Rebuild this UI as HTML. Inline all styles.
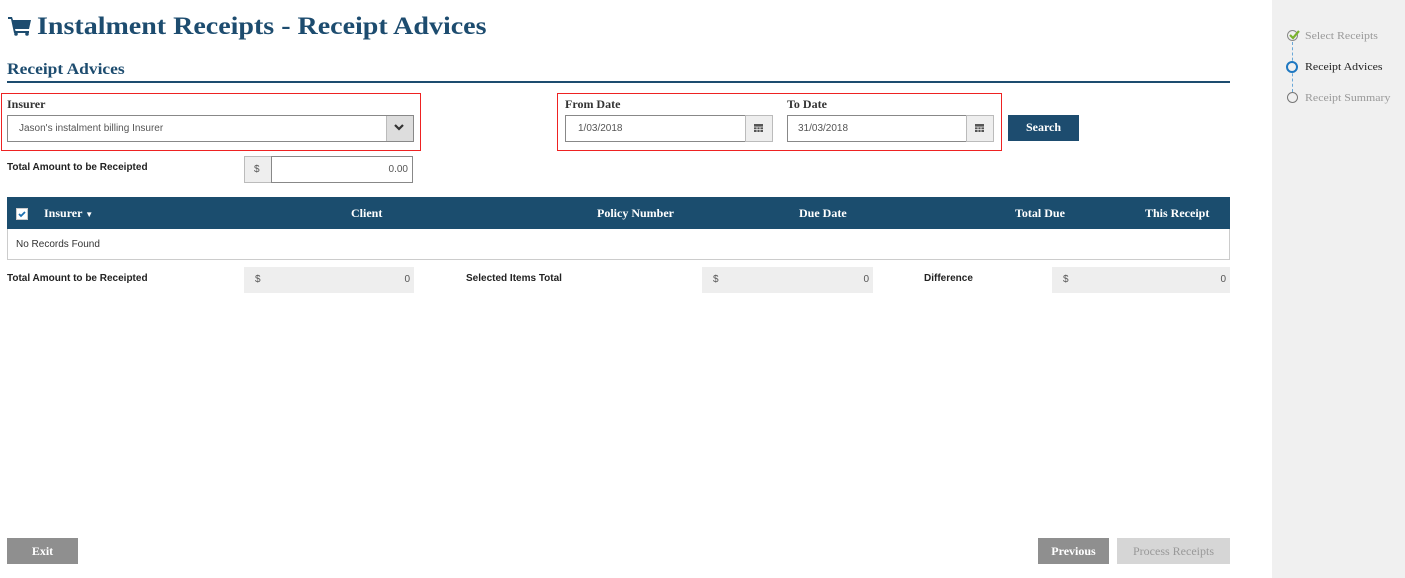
<!DOCTYPE html>
<html><head><meta charset="utf-8"><style>
*{box-sizing:border-box;margin:0;padding:0}
body{width:1405px;height:578px;background:#fff;position:relative;overflow:hidden;font-family:"Liberation Sans",sans-serif;color:#333}
.a{position:absolute}
.serif{font-family:"Liberation Serif",serif;font-weight:bold}
.navy{color:#1d4c6f}
.lbl{font-size:12px;color:#333;font-family:"Liberation Serif",serif;font-weight:bold}
.inp{border:1px solid #999;border-right-color:#ccc;border-bottom-color:#ccc;background:#fff;font-size:10px;color:#555}
.box{background:#eee;border:1px solid #bbb}
.b11{font-size:10px;font-weight:bold;color:#222}
.th{color:#fff;font-size:12px;font-family:"Liberation Serif",serif;font-weight:bold;top:206px}
.btn{font-family:"Liberation Serif",serif;font-weight:bold;font-size:12px;text-align:center;line-height:26px}
.sx{transform-origin:0 0;white-space:nowrap}
</style></head><body>
<svg class="a" style="left:8px;top:16px" width="24" height="20" viewBox="0 0 24 20"><path d="M0 1h4l1 3h18l-2 9H7l.6 2H21v2H6L3 3H0z" fill="#1d4c6f"/><circle cx="8" cy="18" r="1.8" fill="#1d4c6f"/><circle cx="19" cy="18" r="1.8" fill="#1d4c6f"/></svg>
<div class="a serif navy sx" style="left:37px;top:13px;font-size:25px;transform:scaleX(1.12)">Instalment Receipts - Receipt Advices</div>
<div class="a serif navy sx" style="left:7px;top:61px;font-size:16px;transform:scaleX(1.09)">Receipt Advices</div>
<div class="a" style="left:7px;top:81px;width:1223px;height:2px;background:#1d4c6f"></div>

<div class="a" style="left:1px;top:93px;width:420px;height:58px;border:1px solid #e22"></div>
<div class="a lbl" style="left:7px;top:97px">Insurer</div>
<div class="a inp" style="left:7px;top:115px;width:407px;height:27px;border:1px solid #888;padding:7px 11px">Jason's instalment billing Insurer</div>
<div class="a" style="left:386px;top:116px;width:27px;height:25px;background:#ddd;border-left:1px solid #bbb"></div>
<svg class="a" style="left:393px;top:123px" width="12" height="10"><path d="M2 2l4 4 4-4" stroke="#333" stroke-width="2.2" fill="none"/></svg>

<div class="a" style="left:557px;top:93px;width:445px;height:58px;border:1px solid #e22"></div>
<div class="a lbl" style="left:565px;top:97px">From Date</div>
<div class="a lbl" style="left:787px;top:97px">To Date</div>
<div class="a inp" style="left:565px;top:115px;width:208px;height:27px;border:1px solid #888;padding:7px 12px">1/03/2018</div>
<div class="a box" style="left:745px;top:115px;width:28px;height:27px"></div>
<div class="a inp" style="left:787px;top:115px;width:207px;height:27px;border:1px solid #888;padding:7px 10px">31/03/2018</div>
<div class="a box" style="left:966px;top:115px;width:28px;height:27px"></div>
<svg class="a" style="left:754px;top:123px" width="10" height="10"><rect x="0" y="1" width="9" height="8" fill="#555"/><path d="M0 4h9M3 4v5M6 4v5M0 6.5h9" stroke="#eee" stroke-width=".8"/></svg>
<svg class="a" style="left:975px;top:123px" width="10" height="10"><rect x="0" y="1" width="9" height="8" fill="#555"/><path d="M0 4h9M3 4v5M6 4v5M0 6.5h9" stroke="#eee" stroke-width=".8"/></svg>
<div class="a btn" style="left:1008px;top:115px;width:71px;height:26px;background:#1d4c6f;color:#fff;line-height:25px">Search</div>

<div class="a b11" style="left:7px;top:162px">Total Amount to be Receipted</div>
<div class="a box" style="left:244px;top:156px;width:28px;height:27px;font-size:10px;color:#555;padding:7px 9px">$</div>
<div class="a" style="left:271px;top:156px;width:142px;height:27px;border:1px solid #888;font-size:10px;color:#555;text-align:right;padding:7px 4px">0.00</div>

<div class="a" style="left:7px;top:197px;width:1223px;height:63px;border:1px solid #ccc"></div>
<div class="a" style="left:7px;top:197px;width:1223px;height:32px;background:#1b4d6e"></div>
<div class="a" style="left:16px;top:208px;width:12px;height:12px;background:#fff;border:1px solid #ccc"></div>
<svg class="a" style="left:17px;top:209px" width="10" height="10"><path d="M2 5l2 2 4-4" stroke="#1d6fb0" stroke-width="1.8" fill="none"/></svg>
<div class="a th" style="left:44px">Insurer <span style="font-size:8px">▼</span></div>
<div class="a th" style="left:351px">Client</div>
<div class="a th" style="left:597px">Policy Number</div>
<div class="a th" style="left:799px">Due Date</div>
<div class="a th" style="left:1015px">Total Due</div>
<div class="a th" style="left:1145px">This Receipt</div>
<div class="a" style="left:16px;top:239px;font-size:10px;color:#333">No Records Found</div>

<div class="a b11" style="left:7px;top:273px">Total Amount to be Receipted</div>
<div class="a" style="left:244px;top:267px;width:170px;height:26px;background:#eee;font-size:10px;color:#555;padding:7px 11px">$<span style="float:right;margin-right:-7px">0</span></div>
<div class="a b11" style="left:466px;top:273px">Selected Items Total</div>
<div class="a" style="left:702px;top:267px;width:171px;height:26px;background:#eee;font-size:10px;color:#555;padding:7px 11px">$<span style="float:right;margin-right:-7px">0</span></div>
<div class="a b11" style="left:924px;top:273px">Difference</div>
<div class="a" style="left:1052px;top:267px;width:178px;height:26px;background:#eee;font-size:10px;color:#555;padding:7px 11px">$<span style="float:right;margin-right:-7px">0</span></div>

<div class="a btn" style="left:7px;top:538px;width:71px;height:26px;background:#8f8f8f;color:#fff">Exit</div>
<div class="a btn" style="left:1038px;top:538px;width:71px;height:26px;background:#8f8f8f;color:#fff">Previous</div>
<div class="a btn" style="left:1117px;top:538px;width:113px;height:26px;background:#d6d6d6;color:#999;font-weight:normal">Process Receipts</div>

<div class="a" style="left:1272px;top:0;width:133px;height:578px;background:#f0f0f0"></div>
<div class="a" style="left:1292px;top:42px;height:50px;border-left:1px dashed #6aa8d8"></div>
<div class="a" style="left:1287px;top:30px;width:11px;height:11px;border-radius:50%;border:1.5px solid #888;background:#f0f0f0"></div>
<svg class="a" style="left:1288px;top:29px" width="12" height="11"><path d="M2 6l3 3 6-7" stroke="#7ab32e" stroke-width="2.2" fill="none"/></svg>
<div class="a" style="left:1286px;top:61px;width:12px;height:12px;border-radius:50%;border:2.5px solid #1f78c1;background:#f0f0f0"></div>
<div class="a" style="left:1287px;top:92px;width:11px;height:11px;border-radius:50%;border:1.2px solid #777;background:#f0f0f0"></div>
<div class="a sx" style="left:1305px;top:30px;font-size:11px;color:#999;font-family:'Liberation Serif',serif;transform:scaleX(1.08)">Select Receipts</div>
<div class="a sx" style="left:1305px;top:61px;font-size:11px;color:#222;font-family:'Liberation Serif',serif;transform:scaleX(1.08)">Receipt Advices</div>
<div class="a sx" style="left:1305px;top:92px;font-size:11px;color:#999;font-family:'Liberation Serif',serif;transform:scaleX(1.08)">Receipt Summary</div>
</body></html>
